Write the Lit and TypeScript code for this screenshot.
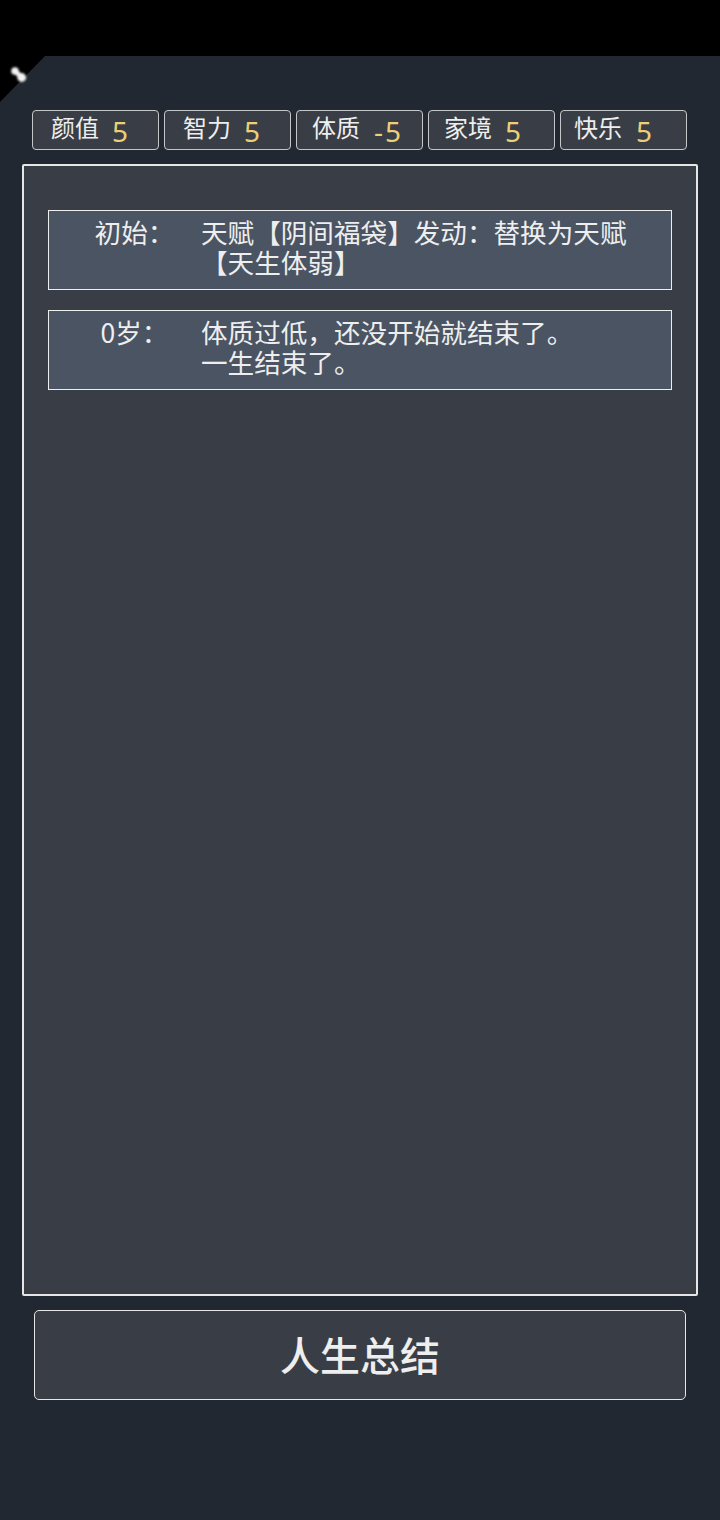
import { LitElement, html, css } from "lit";
import { customElement } from "lit/decorators.js";

const stats: [string, string][] = [
  ["颜值", "5"],
  ["智力", "5"],
  ["体质", "-5"],
  ["家境", "5"],
  ["快乐", "5"],
];
const rows: [string, string[]][] = [
  ["初始：", ["天赋【阴间福袋】发动：替换为天赋", "【天生体弱】"]],
  ["0岁：", ["体质过低，还没开始就结束了。", "一生结束了。"]],
];

@customElement("app-root")
export class AppRoot extends LitElement {
  static styles = css`
    :host {
      display: block;
      height: 1520px;
      background: #222831;
      color: #eeeeee;
      font-family: "Noto Sans CJK SC", "Noto Sans", sans-serif;
      position: relative;
      overflow: hidden;
    }
    .status { height: 56px; background: #000; }
    .corner { position: absolute; left: 0; top: 56px; display: block; }
    .bone { filter: blur(0.8px); }
    .stats { display: flex; gap: 5px; margin: 54px 0 0 32px; }
    .stat {
      box-sizing: border-box;
      width: 127px;
      height: 40px;
      border: 1px solid #c4c6c9;
      border-radius: 4px;
      background: #393e46;
      padding-left: 18px;
      display: flex;
      align-items: center;
      font-size: 24px;
      gap: 13px;
    }
    .stat:nth-child(3), .stat:nth-child(4) { padding-left: 15px; }
    .stat:nth-child(3) { gap: 14px; }
    .stat:nth-child(5) { padding-left: 13px; gap: 14px; }
    .stat .k { line-height: 30px; position: relative; top: -3px; }
    .stat .v {
      color: #eccf76;
      font-family: "Noto Sans", sans-serif;
      font-size: 28px;
      letter-spacing: 2px;
      line-height: 30px;
      position: relative;
      top: 1px;
    }
    .panel {
      box-sizing: border-box;
      width: 676px;
      height: 1132px;
      margin: 14px 0 0 22px;
      background: #393e46;
      border: 2px solid #e6e6e6;
      border-radius: 2px;
      padding: 44px 24px 0;
      display: flex;
      flex-direction: column;
      gap: 20px;
    }
    .row {
      box-sizing: border-box;
      height: 80px;
      background: #4a5463;
      border: 1px solid #eeeeee;
      display: flex;
      padding: 6px 0 0 19px;
      font-size: 26.6px;
      line-height: 30px;
    }
    .label { width: 133px; text-align: center; flex: none; }
    .text div { white-space: nowrap; }
    .btn {
      box-sizing: border-box;
      width: 652px;
      height: 90px;
      margin: 14px 0 0 34px;
      padding-bottom: 2px;
      background: #393e46;
      border: 1px solid #e6e6e6;
      border-radius: 5px;
      display: flex;
      align-items: center;
      justify-content: center;
      font-size: 40px;
      font-weight: 500;
    }
  `;

  render() {
    return html`
      <div class="status"></div>
      <svg class="corner" width="46" height="48" viewBox="0 0 46 48">
        <polygon points="0,0 45,0 0,46" fill="#000"></polygon>
        <g class="bone">
          <path d="M15 15 L22 21.5" stroke="#f2f2f2" stroke-width="5" stroke-linecap="round"></path>
          <circle cx="15" cy="15" r="3.8" fill="#f2f2f2"></circle>
          <circle cx="21.7" cy="21.5" r="4.4" fill="#f2f2f2"></circle>
        </g>
      </svg>
      <div class="stats">
        ${stats.map(
          ([k, v]) => html`<div class="stat"><span class="k">${k}</span><span class="v">${v}</span></div>`
        )}
      </div>
      <div class="panel">
        ${rows.map(
          ([l, lines]) => html`<div class="row">
            <div class="label">${l}</div>
            <div class="text">${lines.map((t) => html`<div>${t}</div>`)}</div>
          </div>`
        )}
      </div>
      <div class="btn">人生总结</div>
    `;
  }
}
